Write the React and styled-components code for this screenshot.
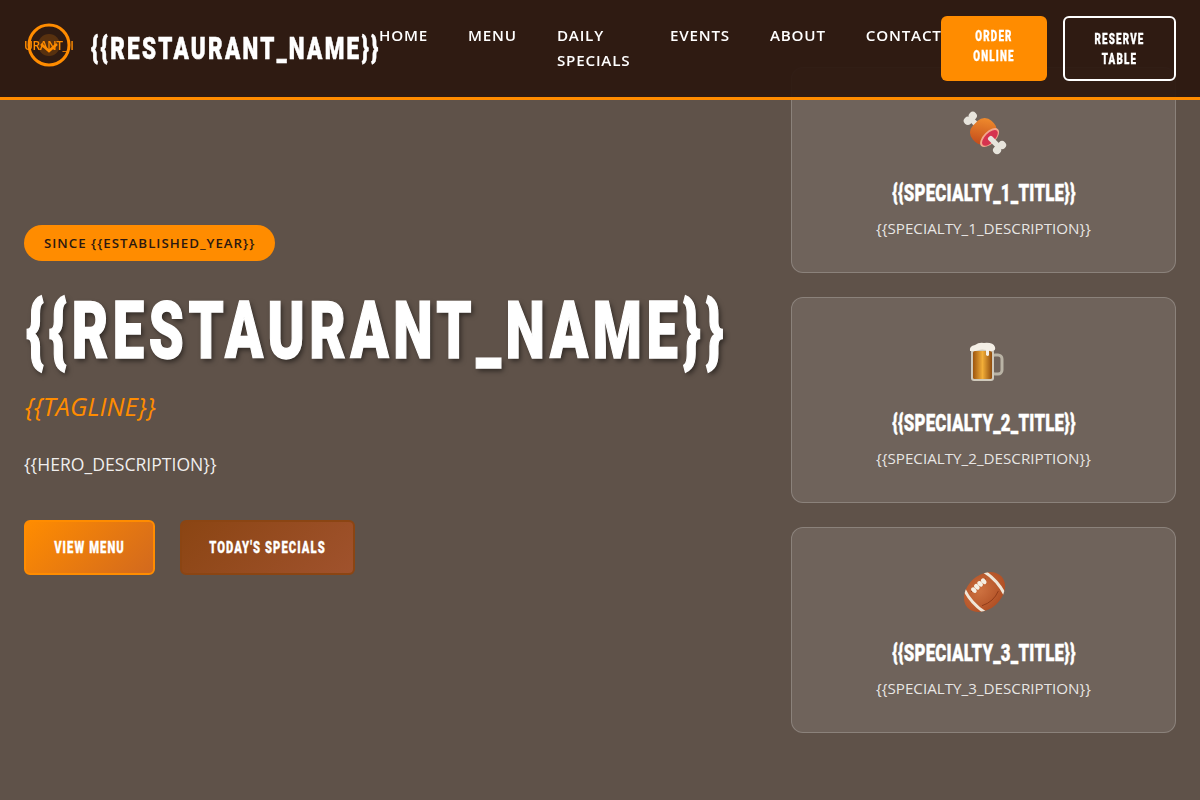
import styled, { createGlobalStyle } from "styled-components";

const display = `Roboto, "Liberation Sans", sans-serif`;
const body = `"Open Sans", sans-serif`;

const GlobalStyle = createGlobalStyle`
  * { box-sizing: border-box; }
  html, body { margin: 0; padding: 0; }
  body { font-family: ${body}; color: #fff; background: #5f5249; }
`;

const LogoMark = () => (
  <LogoSvg viewBox="0 0 50 48" aria-hidden="true">
    <circle cx="25" cy="24" r="11" fill="#ff8c00" opacity="0.2" />
    <circle cx="25" cy="24" r="20" fill="none" stroke="#ff8c00" strokeWidth="3" />
    <text x="0" y="29" textLength="50" fontFamily="Open Sans, sans-serif" fontSize="12" fontWeight="600" fill="#ff8c00">URANT_II</text>
    <path d="M17 23l8 7 8-7" fill="none" stroke="#ff8c00" strokeWidth="2.500" />
  </LogoSvg>
);

const MeatIcon = () => (
  <svg width="48" height="48" viewBox="0 0 48 48" aria-hidden="true">
    <defs>
      <linearGradient id="meat" x1="0" y1="0" x2="0.6" y2="1">
        <stop offset="0" stopColor="#f5932f" />
        <stop offset="1" stopColor="#c6501c" />
      </linearGradient>
    </defs>
    <g transform="translate(24 24) rotate(45) scale(0.88)">
      <g fill="#e7e4dc">
        <rect x="-24" y="-3" width="14" height="6" />
        <circle cx="-22" cy="-4" r="4.600" />
        <circle cx="-22" cy="4" r="4.600" />
      </g>
      <rect x="-14" y="-15" width="26" height="30" rx="11" fill="url(#meat)" />
      <ellipse cx="9" cy="0" rx="7" ry="13.500" fill="#f3a78c" />
      <ellipse cx="9.500" cy="0" rx="5.500" ry="11.500" fill="#d6334f" />
      <g fill="#e7e4dc">
        <rect x="8" y="-3" width="18" height="6" rx="2" />
        <circle cx="25" cy="-4" r="4.600" />
        <circle cx="25" cy="4" r="4.600" />
      </g>
    </g>
  </svg>
);

const BeerIcon = () => (
  <svg width="48" height="48" viewBox="0 0 48 48" aria-hidden="true">
    <defs>
      <linearGradient id="beer" x1="0" y1="0" x2="1" y2="0">
        <stop offset="0" stopColor="#9c5510" />
        <stop offset="0.5" stopColor="#f2ae38" />
        <stop offset="1" stopColor="#8f4c0e" />
      </linearGradient>
    </defs>
    <rect x="31" y="17" width="11" height="19" rx="4" fill="none" stroke="#b9b3a5" strokeWidth="3" />
    <rect x="11" y="11" width="23" height="32" rx="3" fill="#cfc9bb" />
    <rect x="13" y="13" width="19" height="28" rx="1.500" fill="url(#beer)" />
    <path d="M10 13q-1-5 5-6 4-3 9-2 9-1 11 4 1 4-3 4-2 1-3-1v5q-1 2-3 0v-5q-4-1-7 0-6 2-8 1z" fill="#f4efe6" />
  </svg>
);

const BallIcon = () => (
  <svg width="48" height="48" viewBox="0 0 48 48" aria-hidden="true">
    <defs>
      <radialGradient id="ball" cx="0.45" cy="0.4" r="0.7">
        <stop offset="0" stopColor="#cd7140" />
        <stop offset="1" stopColor="#ac4a20" />
      </radialGradient>
      <clipPath id="ball-clip">
        <ellipse cx="0" cy="0" rx="23" ry="17" />
      </clipPath>
    </defs>
    <g transform="translate(24.500 24) rotate(-42)">
      <ellipse cx="0" cy="0" rx="23" ry="17" fill="url(#ball)" />
      <g clipPath="url(#ball-clip)" fill="none" stroke="#efe6d8" strokeWidth="3">
        <path d="M-13 -17q-5 17 0 34" />
        <path d="M13 -17q5 17 0 34" />
      </g>
      <path d="M-10 -9q10 -2 20 0" fill="none" stroke="#8a3716" strokeWidth="0.800" />
      <path d="M-11 8.500q11 5 22 0" fill="none" stroke="#8a3716" strokeWidth="0.800" />
      <g fill="#f4eee2">
        <ellipse cx="-6.600" cy="-8.500" rx="2.200" ry="3.200" />
        <ellipse cx="-2.200" cy="-9" rx="2.200" ry="3.200" />
        <ellipse cx="2.200" cy="-9" rx="2.200" ry="3.200" />
        <ellipse cx="6.600" cy="-8.500" rx="2.200" ry="3.200" />
      </g>
    </g>
  </svg>
);

const specialties = [
  { Icon: MeatIcon, title: "{{SPECIALTY_1_TITLE}}", text: "{{SPECIALTY_1_DESCRIPTION}}" },
  { Icon: BeerIcon, title: "{{SPECIALTY_2_TITLE}}", text: "{{SPECIALTY_2_DESCRIPTION}}" },
  { Icon: BallIcon, title: "{{SPECIALTY_3_TITLE}}", text: "{{SPECIALTY_3_DESCRIPTION}}" },
];

const App = () => (
  <>
    <GlobalStyle />
    <Header>
      <Brand>
        <LogoMark />
        <BrandName><Narrow $x={0.7}>{"{{RESTAURANT_NAME}}"}</Narrow></BrandName>
      </Brand>
      <Nav>
        <NavLink href="#">Home</NavLink>
        <NavLink href="#">Menu</NavLink>
        <NavLink href="#" $wrap>Daily Specials</NavLink>
        <NavLink href="#">Events</NavLink>
        <NavLink href="#">About</NavLink>
        <NavLink href="#">Contact</NavLink>
      </Nav>
      <HeaderActions>
        <OrderButton><Narrow $x={0.7} $center>Order Online</Narrow></OrderButton>
        <ReserveButton><Narrow $x={0.7} $center>Reserve Table</Narrow></ReserveButton>
      </HeaderActions>
    </Header>
    <Hero>
      <HeroText>
        <Badge>Since {"{{ESTABLISHED_YEAR}}"}</Badge>
        <HeroTitle><Narrow $x={0.7}>{"{{RESTAURANT_NAME}}"}</Narrow></HeroTitle>
        <Tagline>{"{{TAGLINE}}"}</Tagline>
        <HeroDescription>{"{{HERO_DESCRIPTION}}"}</HeroDescription>
        <HeroActions>
          <PrimaryButton><Narrow $x={0.7} $center>View Menu</Narrow></PrimaryButton>
          <SecondaryButton><Narrow $x={0.7} $center>Today's Specials</Narrow></SecondaryButton>
        </HeroActions>
      </HeroText>
      <Cards>
        {specialties.map(({ Icon, title, text }) => (
          <Card key={title}>
            <CardIcon><Icon /></CardIcon>
            <CardTitle><Narrow $x={0.7} $center>{title}</Narrow></CardTitle>
            <CardText>{text}</CardText>
          </Card>
        ))}
      </Cards>
    </Hero>
  </>
);

// no condensed family is installed, so the display face gets squeezed by hand
const Narrow = styled.span`
  display: block;
  transform: scaleX(${(p) => p.$x});
  transform-origin: ${(p) => (p.$center ? "center" : "left")};
`;

const Header = styled.header`
  position: fixed;
  top: 0;
  left: 0;
  right: 0;
  z-index: 10;
  height: 100px;
  display: flex;
  align-items: flex-start;
  padding: 16px 24px 0;
  background: rgba(44, 24, 16, 0.95);
  border-bottom: 3px solid #ff8c00;
`;

const Brand = styled.div`
  display: flex;
  align-items: center;
  gap: 17px;
  width: 355px;
  height: 58px;
  flex-shrink: 0;
`;

const LogoSvg = styled.svg`
  width: 50px;
  height: 48px;
  flex-shrink: 0;
`;

const BrandName = styled.span`
  font-family: ${display};
  font-size: 32px;
  font-weight: 900;
  letter-spacing: 3.3px;
  white-space: nowrap;
  padding-top: 6px;
  -webkit-text-stroke: 0.6px #fff;
`;

const Nav = styled.nav`
  display: flex;
  gap: 40px;
  width: 562px;
  padding-top: 7px;
  flex-shrink: 0;
`;

const NavLink = styled.a`
  color: #fff;
  text-decoration: none;
  text-transform: uppercase;
  font-size: 15.2px;
  font-weight: 600;
  letter-spacing: 0.8px;
  line-height: 25px;
  white-space: ${(p) => (p.$wrap ? "normal" : "nowrap")};
  width: ${(p) => (p.$wrap ? "73px" : "auto")};
`;

const HeaderActions = styled.div`
  display: flex;
  gap: 16px;
`;

const HeaderButton = styled.button`
  font-family: ${display};
  font-size: 14px;
  font-weight: 900;
  letter-spacing: 1.7px;
  line-height: 20px;
  text-transform: uppercase;
  height: 65px;
  border-radius: 6px;
  color: #fff;
  -webkit-text-stroke: 0.3px #fff;
`;

const OrderButton = styled(HeaderButton)`
  width: 106px;
  padding: 0 14px 6px;
  background: #ff8c00;
  border: none;
`;

const ReserveButton = styled(HeaderButton)`
  width: 113px;
  padding: 0 8px;
  background: transparent;
  border: 2px solid #fff;
`;

const Hero = styled.main`
  min-height: 800px;
  display: grid;
  grid-template-columns: minmax(0, 1fr) 385px;
  align-items: center;
  padding: 0 24px;
`;

const HeroText = styled.div`
  display: flex;
  flex-direction: column;
  align-items: flex-start;
`;

const Badge = styled.span`
  background: #ff8c00;
  color: #2c1810;
  height: 36px;
  line-height: 36px;
  padding: 0 20px;
  border-radius: 18px;
  font-size: 13.3px;
  font-weight: 600;
  letter-spacing: 1px;
  text-transform: uppercase;
`;

const HeroTitle = styled.h1`
  font-family: ${display};
  font-size: 80px;
  font-weight: 900;
  line-height: 96px;
  letter-spacing: 6.6px;
  margin: 22px 0 0 2px;
  white-space: nowrap;
  -webkit-text-stroke: 1.5px #fff;
  text-shadow: 3px 3px 6px rgba(0, 0, 0, 0.5);
`;

const Tagline = styled.p`
  color: #ff8c00;
  font-size: 25.6px;
  font-style: italic;
  line-height: 36px;
  margin: 10px 0 0 1px;
`;

const HeroDescription = styled.p`
  font-size: 17.6px;
  line-height: 27px;
  margin: 26px 0 0;
  color: rgba(255, 255, 255, 0.92);
`;

const HeroActions = styled.div`
  display: flex;
  gap: 25px;
  margin-top: 42px;
`;

const HeroButton = styled.button`
  font-family: ${display};
  font-size: 16px;
  font-weight: 900;
  letter-spacing: 1.55px;
  text-transform: uppercase;
  white-space: nowrap;
  color: #fff;
  height: 55px;
  padding: 0;
  border-radius: 6px;
  -webkit-text-stroke: 0.3px #fff;
`;

const PrimaryButton = styled(HeroButton)`
  width: 131px;
  background: linear-gradient(135deg, #ff8c00, #d2691e);
  border: 2px solid #ff8c00;
`;

const SecondaryButton = styled(HeroButton)`
  width: 175px;
  background: linear-gradient(135deg, #8b4513, #a0522d);
  border: 2px solid #8b4513;
`;

const Cards = styled.div`
  display: flex;
  flex-direction: column;
  gap: 24px;
`;

const Card = styled.article`
  height: 206px;
  display: flex;
  flex-direction: column;
  align-items: center;
  padding-top: 40px;
  background: rgba(255, 255, 255, 0.1);
  border: 1px solid rgba(255, 255, 255, 0.2);
  border-radius: 12px;
`;

const CardIcon = styled.div`
  height: 48px;
  line-height: 0;
`;

const CardTitle = styled.h3`
  font-family: ${display};
  font-size: 24px;
  font-weight: 900;
  line-height: 36px;
  letter-spacing: 0.35px;
  margin: 19px 0 0;
  -webkit-text-stroke: 0.4px #fff;
`;

const CardText = styled.p`
  font-size: 15.2px;
  line-height: 24px;
  margin: 5px 0 0;
  color: rgba(255, 255, 255, 0.85);
`;

export default App;
